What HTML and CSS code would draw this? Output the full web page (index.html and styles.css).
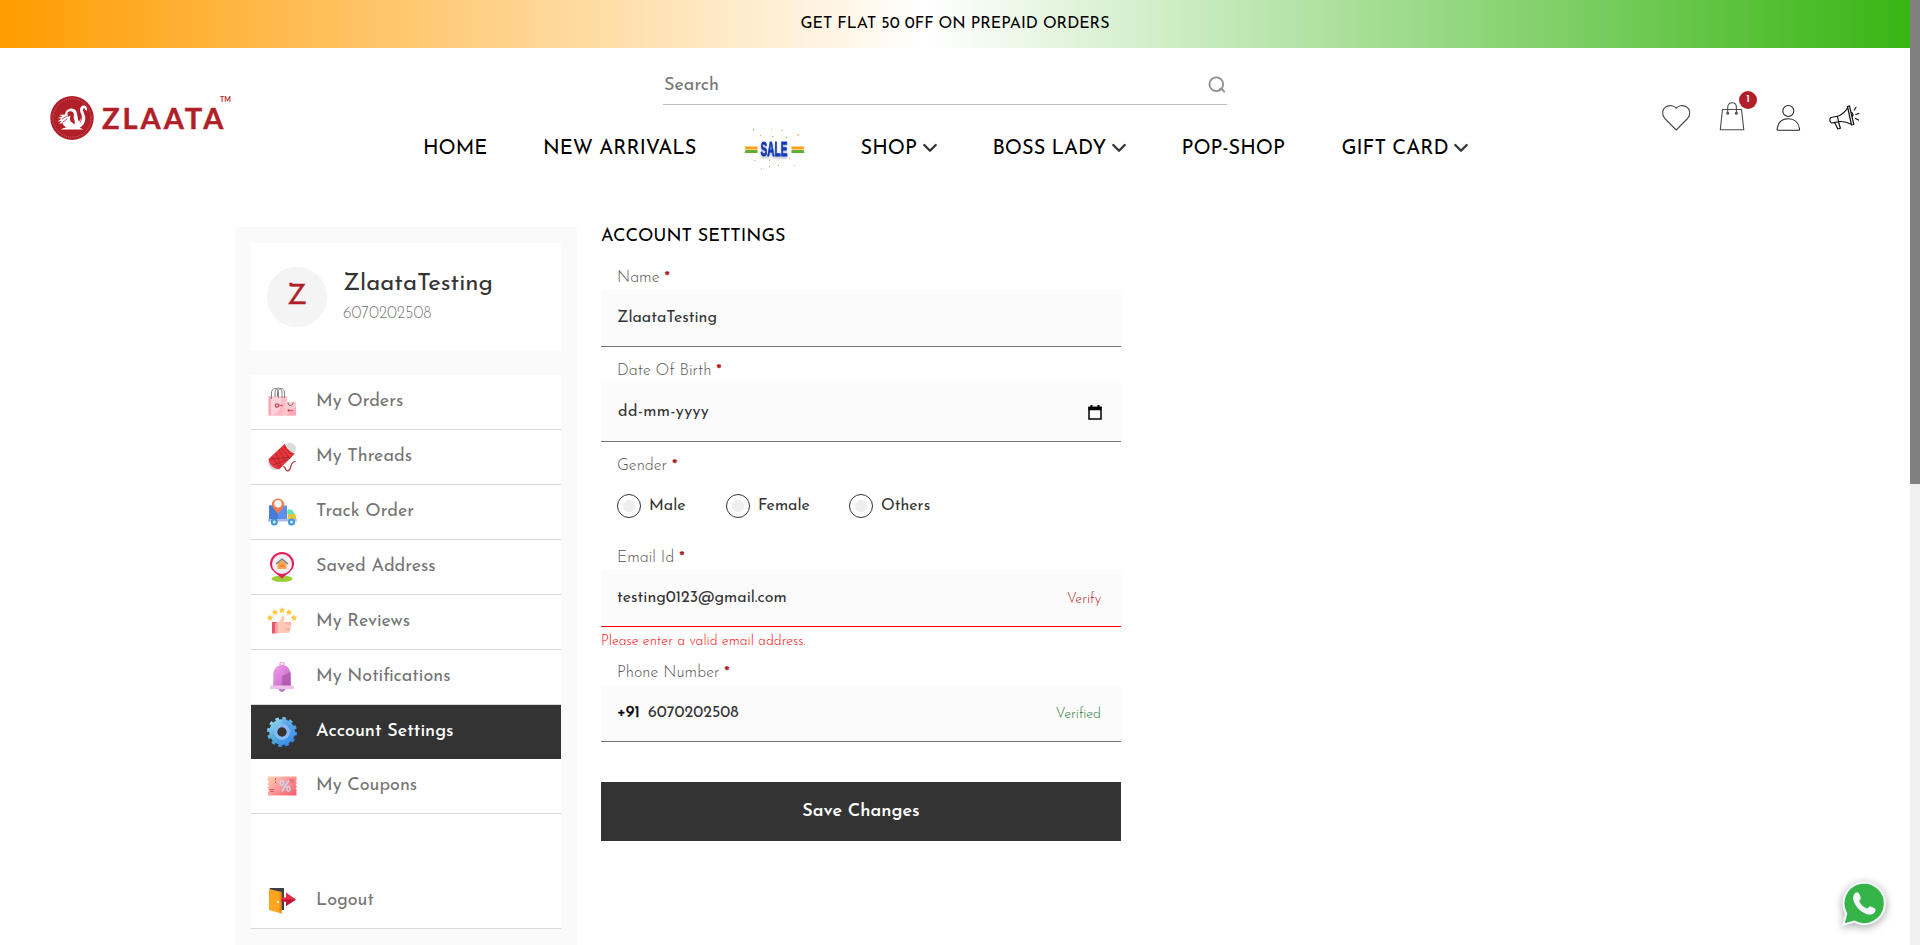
FILE: index.html
```
<!DOCTYPE html>
<html lang="en">
<head>
<meta charset="utf-8">
<title>Zlaata - Account Settings</title>
<link rel="stylesheet" href="styles.css">
</head>
<body>
<div class="page">
  <div class="promo">GET FLAT 50 0FF ON PREPAID ORDERS</div>

  <header class="header">
    <a class="logo">
      <svg class="logo-mark" viewBox="0 0 44 46" aria-hidden="true">
        <ellipse cx="22" cy="23" rx="21.7" ry="22" fill="#b11f29"/>
        <ellipse cx="22" cy="23" rx="19" ry="19.3" fill="none" stroke="#d98a8e" stroke-width=".7" stroke-dasharray="1 1.2"/>
        <path d="M11 34.500c2-1.500 4-2 6-2-2.500-1-4-2.500-4.500-4.500l-3.500 1 2.500-3-4 .5 4-3-4-.5 5-1.500-3.500-1.500 6-.5c.5-3.500 3-6 6.500-6 3.500.2 5.500 2.500 5.500 5.500 1 2.500.3 5 2 7.500 2.200-2 2.700-5 1.700-8.500-1-3.300-1-6.500 2.200-7.500 2.700-.6 4.800 1.800 4 5.200l-1.600-.8c0-1.700-1.500-2.200-2.100-.9-.7 2.200 1.700 5 2 8.500.4 4.500-2 8.500-5.500 10.200l3.800 1.800z" fill="#fff"/>
        <path d="M17.500 17.500c2-2 5-1.500 6 .5 1 2-.5 4.500.8 7 .7 1.500.7 3-.3 4.500-1-2-3.500-2.500-4-4.500-.4-1.700.6-3 .3-4.800-.6.800-1.600 1.300-2.600 1.800z" fill="#b11f29"/>
        <path d="M12 24c2-.7 3-2.500 5-2.800M12.500 27.500c2-1 3-3 4.800-4M30 27.500c2-3 2-6 .8-9" fill="none" stroke="#b11f29" stroke-width=".8"/>
      </svg>
      <span class="logo-text">ZLAATA</span><span class="logo-tm">TM</span>
    </a>

    <div class="header-center">
      <div class="search">
        <span>Search</span>
        <svg width="18" height="18" viewBox="0 0 18 18" fill="none" stroke="#8f8f8f" stroke-width="1.8"><circle cx="8.300" cy="8.300" r="6.900"/><path d="M11 14l2-1.500 3.800 3.700"/></svg>
      </div>
      <nav class="nav">
        <a>HOME</a>
        <a>NEW ARRIVALS</a>
        <a><svg class="sale" width="62" height="44" viewBox="0 0 62 44">
          <path d="M1.500 19.500h13v3H1.500l1.200-1.500zM48.500 19.500h13l-1.200 1.500 1.200 1.500h-13z" fill="#fb9e12"/>
          <path d="M2.500 23h12v3h-13zM48.500 23h12l1 3h-13z" fill="#5faf35"/>
          <g fill="#f2a65a"><path d="M28 2h1v1h-1zM17 8h1v1h-1zM54.500 7h1.500v1.500h-1.500zM46 31h1v1h-1zM26 32.500h1v1.500h-1zM18 41h1v1h-1zM51 38h1v1h-1z"/></g>
          <g fill="#6cbd58"><path d="M10 2h1v1.500h-1zM38.500 3h1v1h-1zM29 9h1.500v.8H29zM43 10h1v1h-1zM11.500 33h1v1h-1zM26 39h1v1h-1zM35 38h1v1h-1z"/></g>
          <text x="17.500" y="29" textLength="27" lengthAdjust="spacingAndGlyphs" class="sale-text">SALE</text>
        </svg></a>
        <a>SHOP<svg class="chev" viewBox="0 0 14 10"><path d="M1.300 2L7 7.800 12.700 2"/></svg></a>
        <a>BOSS LADY<svg class="chev" viewBox="0 0 14 10"><path d="M1.300 2L7 7.800 12.700 2"/></svg></a>
        <a>POP-SHOP</a>
        <a>GIFT CARD<svg class="chev" viewBox="0 0 14 10"><path d="M1.300 2L7 7.800 12.700 2"/></svg></a>
      </nav>
    </div>

    <div class="tools">
      <svg class="tool" viewBox="0 0 32 32"><path d="M16.200 28L4.800 16.500C1.300 12.500 2.300 7 6 4.800c4-2.200 8.300-1.200 10.200 1.500 2-2.700 6.200-3.700 10.200-1.500 3.700 2.200 4.700 7.700 1.200 11.700z"/></svg>
      <span class="bag">
        <svg class="tool" viewBox="0 0 32 32"><path d="M6.500 7.500h19l2.300 20.300H4.300zM11.700 11V5.200c0-6 8.700-6 8.700 0V11"/><circle cx="11.700" cy="11.300" r="1"/><circle cx="20.400" cy="11.300" r="1"/></svg>
        <span class="badge">1</span>
      </span>
      <svg class="tool person" viewBox="0 0 32 32"><circle cx="16.300" cy="9" r="5.500"/><path d="M5.700 28.200c-.7 0-.6-.6-.5-1.400C6 20.400 10.300 16.800 16.300 16.800s10.400 3.600 11.200 10c.1.800.1 1.400-.6 1.400z"/></svg>
      <svg class="tool dark" viewBox="0 0 32 32"><path d="M3 15.500l7.500-1.500c4-1.700 7-4.500 9.300-8.500l3.500 16.700c-4-2-8-3-12-2.600L3.500 21c-2-.5-2.200-4.800-.5-5.500zM9.500 14.200l1 5.300M19.500 4.500l2-.7 4.300 18.700-2.300.5zM6.800 20.700l3 6.300 2.600-.8-2-6.400M22.800 10.500c2.400-.2 3 3.500 1 4.500M26.300 8l1.700-2.700M27.800 12.500l3-1M27.500 16.500l3 1.500"/></svg>
    </div>
  </header>

  <div class="content">
    <aside class="sidebar">
      <div class="profile">
        <div class="avatar">Z</div>
        <div class="who">
          <div class="who-name">ZlaataTesting</div>
          <div class="who-phone">6070202508</div>
        </div>
      </div>
      <ul class="menu">
        <li>
          <svg viewBox="0 0 30 30"><path d="M1.500 9h16v19.500h-16z" fill="#ffd3da"/><path d="M1.500 9H4v19.500H1.500z" fill="#ffa9b7"/><path d="M14 9h6v19.500h-6z" fill="#ffbfca"/><path d="M4 28.500C9 27 14 22 15.500 16v12.500z" fill="#ffb6c2"/><path d="M4.500 12V6C4.500 0 11.500 0 11.500 6v5M8 10V6C8-.5 15-.5 15 6v5M10.500 9.500V6c0-6 7-6 7 0v5" fill="none" stroke="#777" stroke-width=".9"/><path d="M18 15h11v13.500H18z" fill="#ffc9d2"/><path d="M19 28.500L29 20v8.500z" fill="#ffa7b4"/><path d="M21 15.500c0 4 5 4 5 0" fill="none" stroke="#666"/><circle cx="10" cy="18.500" r="1.700" fill="none" stroke="#c34a5c" stroke-width="1.300"/><path d="M11.500 18.500H16M22.500 23.500H26" stroke="#d76a79" stroke-width="1.300"/><circle cx="21.700" cy="23.500" r="1.200" fill="#c34a5c"/></svg>
          <span>My Orders</span></li>
        <li>
          <svg viewBox="0 0 30 30"><path d="M19 2.500C21 .3 24 0 27 2.500s2.500 5.500.5 7.500l-4 1z" fill="#d9dcde"/><path d="M1.500 19c-1.500 4.500 3 10 8.500 9l-1-4-4.500-4z" fill="#d3d6d8"/><path d="M18 1.500c1 4.500 5.500 9 10 10L12 27.500C7 27 1.500 22 1.500 17z" fill="#e7363b"/><path d="M17 4c3 5 5 7 9 8.500M4 17l20-2M9 11l5 14M5 15l8 11M12 8l7 12M6 23l16-6M14 6l9 11" fill="none" stroke="#a92330" stroke-width=".9"/><path d="M16 25c3-1.500 1.500 4.500 5 3.800 4-.8 1.500-9.500 7.500-9.300" fill="none" stroke="#b3303c" stroke-width="1.200"/></svg>
          <span>My Threads</span></li>
        <li>
          <svg viewBox="0 0 30 30"><path d="M2 8.500h18v14H2z" fill="#5a90ec"/><path d="M2 8.500h9v14H2z" fill="#467bdc"/><path d="M20.500 13.500h4l4.500 5v5h-8.500z" fill="#e8c53e"/><path d="M20.500 12.500h4l3.500 4.500h-7.500z" fill="#62e3b5"/><path d="M1 22h28.800v2.500H1z" fill="#adb8e8"/><circle cx="7.300" cy="25" r="3.500" fill="#3f96d4"/><circle cx="7.300" cy="25" r="1.500" fill="#d5ecff"/><circle cx="24.500" cy="25" r="3.500" fill="#3f96d4"/><circle cx="24.500" cy="25" r="1.500" fill="#d5ecff"/><path d="M11 17C8 12.500 4.800 10.500 4.800 7a6.300 6.300 0 0 1 12.500 0c0 3.500-3.300 5.500-6.300 10z" fill="#f8794a"/><circle cx="11" cy="6.800" r="3.700" fill="#fff"/></svg>
          <span>Track Order</span></li>
        <li>
          <svg viewBox="0 0 30 30"><ellipse cx="15" cy="26.800" rx="10.500" ry="3.200" fill="#9bcd35"/><path d="M15 27C12 22.500 3 19.500 3 12a12 12 0 0 1 24 0c0 7.500-9 10.500-12 15z" fill="#e41e5c"/><circle cx="15" cy="12" r="10" fill="#f2eff5"/><path d="M10.500 11.500L15 8l4.500 3.500v5.500h-9z" fill="#ffa34f"/><path d="M9 12l6-5 6 5" fill="none" stroke="#67798a" stroke-width="1.200"/><path d="M12.500 13h5v2h-5z" fill="#f98a32"/></svg>
          <span>Saved Address</span></li>
        <li>
          <svg viewBox="0 0 30 30"><g fill="#fcc83c"><path id="star" d="M15 0l1 2.100 2.200.3-1.600 1.500.4 2.300-2-1.100-2 1.100.4-2.300-1.600-1.500 2.200-.3z"/><use href="#star" x="-7" y="2"/><use href="#star" x="7" y="2"/><use href="#star" x="-12" y="7.500"/><use href="#star" x="12" y="7.500"/></g><path d="M9 16.500c4-2 5-4 6-7.300.8-1.200 3 0 2.500 2.500L16.500 15h6.200c1.800 0 1.800 2.200 1 2.700.8.900.8 2.200-.2 3 .5 1 .2 2-.8 2.700.2 1.500-.8 2.600-2 2.600H9z" fill="#ffc8b8"/><path d="M18 15h4.700c1.800 0 1.800 2.200 1 2.700h-4zM18 21.500l4.500-.5c1.200 1 .7 2 0 2.500H18z" fill="#fbb0a1"/><path d="M5 15h5v11.500H5z" fill="#e85566"/><path d="M8 16h3v10H8z" fill="#f4a0a5"/></svg>
          <span>My Reviews</span></li>
        <li>
          <svg viewBox="0 0 30 30"><defs><linearGradient id="bell" x2="1" y2="1"><stop stop-color="#f79cf3"/><stop offset="1" stop-color="#c065bd"/></linearGradient></defs><circle cx="15" cy="2" r="2" fill="none" stroke="#eca7ea" stroke-width="1.400"/><path d="M11.500 26.500c.5 4.500 6.500 4.500 7 0z" fill="#b481c2"/><path d="M6 24c.5-3 .3-7 .3-11C6.300 7 10 3 15 3s8.700 4 8.700 10c0 4-.2 8 .3 11z" fill="url(#bell)"/><path d="M15 14l8.500-4c.5 5 0 10 .5 14h-9z" fill="#a0459e" opacity=".5"/><path d="M3.500 23.500h23L27 27H3z" fill="#ecc0ea"/></svg>
          <span>My Notifications</span></li>
        <li class="active">
          <svg viewBox="0 0 30 30"><defs><linearGradient id="gear" gradientUnits="userSpaceOnUse" x1="4" y1="2" x2="22" y2="28"><stop stop-color="#9adcf5"/><stop offset=".5" stop-color="#55b0d8"/><stop offset="1" stop-color="#2f88ea"/></linearGradient></defs><g fill="none" stroke="url(#gear)"><circle cx="15" cy="15" r="9.500" stroke-width="6.500"/><circle cx="15" cy="15" r="13.500" stroke-width="3" stroke-dasharray="3.535 3.535"/></g><circle cx="15" cy="15" r="6.300" fill="none" stroke="#8ab8f6" stroke-width="3.200"/><path d="M15 1.500a13.500 13.500 0 0 1 0 27v-5a8.500 8.500 0 0 0 0-17z" fill="#5b93ff" opacity=".4"/></svg>
          <span>Account Settings</span></li>
        <li>
          <svg viewBox="0 0 30 30"><defs><linearGradient id="ticket" x2="1" y2=".8"><stop stop-color="#ffd2b3"/><stop offset=".5" stop-color="#ff9c9c"/><stop offset="1" stop-color="#f8606e"/></linearGradient></defs><path d="M.5 5.500h29v4l-1 1 1.500 1.500-1.500 2 1.500 1.700-1.500 1.800 1.500 1.500-1 1.500.5 1v3H1v-3l1-1.500L.5 17 2 15 .5 13 2 11 .5 9.500z" fill="url(#ticket)"/><path d="M8.500 7v2M8.500 10v2M2.500 18.500h5M3 20.500h4M22 9h5M23 11h4" stroke="#e9576a" stroke-width="1"/><path d="M14.800 20.500l7-11" stroke="#c5d9f2" stroke-width="1.500"/><ellipse cx="15" cy="12" rx="1.600" ry="2.300" fill="none" stroke="#c5d9f2" stroke-width="1.400"/><ellipse cx="21.500" cy="17.800" rx="1.600" ry="2.300" fill="none" stroke="#c5d9f2" stroke-width="1.400"/></svg>
          <span>My Coupons</span></li>
        <li class="logout">
          <svg viewBox="0 0 30 30"><path d="M2.500 2h14.500v22H12z" fill="#3d4146"/><path d="M2 3l12.500 3v21.500L2 24z" fill="#ffa51f"/><path d="M12.500 5.500l2 .5v21.500l-2-.5z" fill="#e58b10"/><circle cx="11" cy="16" r="1.200" fill="#fff0c8"/><path d="M14.500 11.500H19v-5L29 13.500 19 20v-4.500h-4.500z" fill="#e92b48"/><path d="M14.500 13.500H29L19 20v-4.500h-4.500z" fill="#bf1237"/></svg>
          <span>Logout</span></li>
      </ul>
    </aside>

    <main class="form">
      <h1>ACCOUNT SETTINGS</h1>

      <label class="first">Name <b>*</b></label>
      <div class="input"><span>ZlaataTesting</span></div>

      <label>Date Of Birth <b>*</b></label>
      <div class="input tall"><span class="date">dd-mm-yyyy</span>
        <svg class="cal" width="14" height="15" viewBox="0 0 14 15"><path d="M1 2.500h12v11.500H1z" fill="none" stroke="#000" stroke-width="1.500"/><path d="M.5 1.800h13v3.400H.5zM2.500 0h2v2.500h-2zM9.500 0h2v2.500h-2z"/></svg>
      </div>

      <label>Gender <b>*</b></label>
      <div class="radios">
        <span class="radio male"><i></i>Male</span>
        <span class="radio female"><i></i>Female</span>
        <span class="radio"><i></i>Others</span>
      </div>

      <label>Email Id <b>*</b></label>
      <div class="input error"><span>testing0123@gmail.com</span><a class="verify">Verify</a></div>
      <p class="message">Please enter a valid email address.</p>

      <label>Phone Number <b>*</b></label>
      <div class="input"><span class="code">+91</span><span>6070202508</span><a class="verified">Verified</a></div>

      <button class="save">Save Changes</button>
    </main>
  </div>

  <a class="whatsapp" aria-label="WhatsApp">
    <svg width="50" height="50" viewBox="0 0 52 52"><path d="M4.500 47.500l3-11.500A21.500 21.500 0 1 1 16 44.300z" fill="#35b44a" stroke="#f6f7f8" stroke-width="2.200" stroke-linejoin="round"/><path d="M16 15.500c1.500-2 4.500-2 5.300.3l1.400 3.600c.5 1.700-2 2.600-1.500 4 1.500 3.300 4.200 5.800 7.700 7.300 1.500.4 2.500-2.600 4.200-2.200l4 2c1.700 1 1 3.500-.5 4.800-3 2.700-8 1.900-12.300-1-5-3.400-8.800-8.500-9.600-13.500-.3-2 .2-4 1.300-5.300z" fill="#f4f5fa"/></svg>
  </a>
</div>
<div class="scrollbar"><div class="thumb"></div></div>
</body>
</html>
```
FILE: styles.css
```
* { box-sizing: border-box; margin: 0; padding: 0; }

body {
  display: flex;
  width: 1920px;
  height: 945px;
  overflow: hidden;
  background: #fff;
  color: #000;
  font-family: "Josefin Sans", Lato, sans-serif;
  font-size: 16px;
}

.page { width: 1910px; height: 945px; }

.scrollbar { width: 10px; background: #f0f0f0; }
.thumb { height: 484px; background: #808080; }

.promo {
  height: 48px;
  line-height: 48px;
  text-align: center;
  background: linear-gradient(90deg, #ff9c00, #fff 48.5%, #38b513);
}

/* header */
.header {
  display: flex;
  height: 179px;
  padding: 0 50px;
}

.logo {
  display: flex;
  align-items: center;
  width: 374px;
  height: 139px;
  color: #b11f29;
  font-family: Lato, sans-serif;
  font-weight: 700;
}
.logo-mark { width: 44px; height: 46px; margin-right: 8px; }
.logo-text { font-size: 29px; letter-spacing: 3px; width: 118px; line-height: 30px; white-space: nowrap; -webkit-text-stroke: .4px #b11f29; }
.logo-tm { font-size: 7px; align-self: flex-start; margin-top: 47px; line-height: 8px; }

.header-center { width: 1236px; padding-top: 16px; }

.search {
  display: flex;
  align-items: center;
  justify-content: space-between;
  width: 564px;
  height: 41px;
  margin-left: 239px;
  padding: 0 1px;
  border-bottom: 1px solid #bcbcbc;
  color: #757575;
  font-size: 18px;
}
.search span { padding-top: 3px; }
.search svg { margin-top: 2px; }

.nav {
  display: grid;
  grid-template-columns: 120px 199.5px 118px 132px 189px 160px 130px;
  align-items: center;
  height: 44px;
  margin: 22px 0 0 -1px;
  font-size: 20px;
}
.nav a { display: flex; align-items: center; white-space: nowrap; }
.chev { width: 14px; height: 10px; margin: -2px 0 0 6px; fill: none; stroke: #333; stroke-width: 2.300; stroke-linecap: round; stroke-linejoin: round; }
.sale-text {
  font: 700 20px "Liberation Sans", sans-serif;
  fill: #1239b8;
  stroke: #1239b8;
  stroke-width: .8;
  filter: drop-shadow(0 2px 1px rgba(30, 40, 90, .3));
}

.tools { display: flex; gap: 24px; padding-top: 54px; }
.tool { display: block; width: 32px; height: 32px; fill: none; stroke: #4a4a4a; stroke-width: 1.100; stroke-linejoin: round; stroke-linecap: round; }
.person { stroke: #222; }
.dark { stroke: #111; stroke-width: 1.200; }
.bag { position: relative; }
.badge {
  position: absolute;
  left: 23px;
  top: -11px;
  width: 18px;
  height: 18px;
  border-radius: 50%;
  background: #b11f29;
  color: #fff;
  font-size: 11px;
  font-weight: 600;
  line-height: 17px;
  text-align: center;
}

/* layout */
.content { display: flex; gap: 24px; padding-left: 235px; }

.sidebar { width: 342px; height: 718px; padding: 16px; background: #fafafa; }

.profile { display: flex; align-items: center; gap: 16px; height: 108px; padding: 0 16px; background: #fff; }
.avatar {
  width: 60px;
  height: 60px;
  border-radius: 50%;
  background: #f4f4f4;
  color: #b11f29;
  font-size: 28px;
  line-height: 60px;
  text-align: center;
  -webkit-text-stroke: .4px #b11f29;
}
.who { padding-bottom: 2px; }
.who-name { color: #333; font-size: 24px; line-height: 30px; }
.who-phone { margin-top: 5px; color: #777; font-weight: 300; line-height: 20px; }

.menu { margin-top: 24px; background: #fff; list-style: none; }
.menu li {
  display: flex;
  align-items: center;
  gap: 19px;
  height: 55px;
  padding: 0 16px;
  border-bottom: 1px solid #d8d8d8;
  color: #757575;
  font-size: 18px;
}
.menu svg { width: 30px; height: 30px; }
.menu .active { height: 54px; border: 0; background: #333; color: #fff; font-weight: 500; }
.menu .logout { margin-top: 60px; }

/* form */
.form { width: 520px; }
h1 { font-size: 18px; font-weight: 400; line-height: 20px; }

label { display: block; height: 26px; margin-top: 10px; padding-left: 16px; color: #555; font-weight: 300; line-height: 29px; }
label b { color: #b11f29; font-weight: 700; }
label.first { margin-top: 17px; }

.input {
  display: flex;
  align-items: center;
  height: 57px;
  padding: 0 20px 0 16px;
  border-bottom: 1px solid #757575;
  background: #fbfbfb;
  color: #333;
}
.tall { height: 59px; }
.error { border-color: #f00; }
.date { padding-left: 1px; letter-spacing: .45px; }
.cal { margin-left: auto; margin-right: -1px; }

.radios { display: flex; height: 56px; padding-left: 16px; color: #333; }
.radio { display: flex; align-items: center; gap: 8px; }
.radio i { width: 24px; height: 24px; border: 1px solid #333; border-radius: 50%; background: radial-gradient(circle, #eee 5.800px, #fff 6.300px); }
.male { width: 109px; }
.female { width: 123px; }

.verify, .verified { margin-left: auto; padding-top: 3px; font-size: 14px; font-weight: 300; }
.verify { color: #b11f29; }
.verified { color: #2c7a3a; }
.message { height: 22px; color: #f00; font-size: 14px; font-weight: 300; line-height: 29px; }
.code { width: 31px; color: #000; -webkit-text-stroke: .3px #000; }

.save {
  display: block;
  width: 520px;
  height: 59px;
  margin-top: 40px;
  border: 0;
  background: #333;
  color: #fff;
  font: 600 18px "Josefin Sans", Lato, sans-serif;
}

.whatsapp { position: fixed; left: 1839px; top: 879px; filter: drop-shadow(0 2px 4px rgba(0, 0, 0, .35)); }
```
